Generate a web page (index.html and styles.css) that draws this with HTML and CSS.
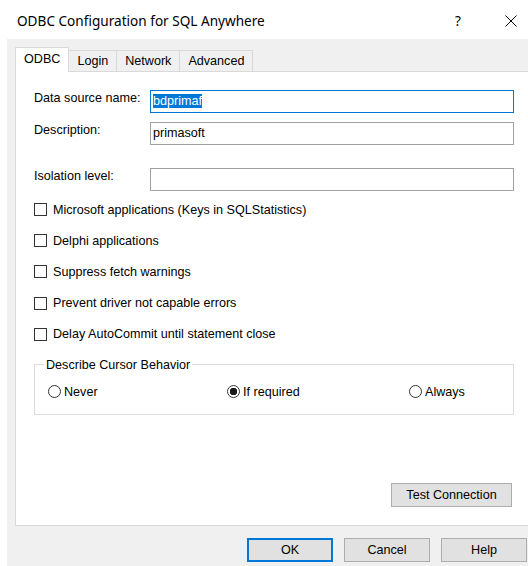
FILE: index.html
```html
<!DOCTYPE html>
<html lang="en">
<head>
<meta charset="utf-8">
<title>ODBC Configuration for SQL Anywhere</title>
<link rel="stylesheet" href="styles.css">
</head>
<body>
<div class="window">
  <div class="titlebar">
    <span class="title">ODBC Configuration for SQL Anywhere</span>
    <span class="caption-btn help">?</span>
    <span class="caption-btn close">
      <svg width="12" height="12" viewBox="0 0 12 12"><path d="M0.5 0.5 L11.5 11.5 M11.5 0.5 L0.5 11.5" stroke="#000" stroke-width="1" fill="none"/></svg>
    </span>
  </div>

  <div class="dialog">
    <div class="tabs">
      <div class="tab active">ODBC</div>
      <div class="tab">Login</div>
      <div class="tab">Network</div>
      <div class="tab">Advanced</div>
    </div>

    <div class="panel">
      <div class="form">
        <div class="field">
          <span class="label">Data source name:</span>
          <div class="input focused"><span class="selection">bdprimaf</span></div>
        </div>
        <div class="field">
          <span class="label">Description:</span>
          <div class="input">primasoft</div>
        </div>
        <div class="field iso">
          <span class="label">Isolation level:</span>
          <div class="input"></div>
        </div>

        <div class="checks">
          <div class="check"><span class="box"></span>Microsoft applications (Keys in SQLStatistics)</div>
          <div class="check"><span class="box"></span>Delphi applications</div>
          <div class="check"><span class="box"></span>Suppress fetch warnings</div>
          <div class="check"><span class="box"></span>Prevent driver not capable errors</div>
          <div class="check"><span class="box"></span>Delay AutoCommit until statement close</div>
        </div>

        <fieldset class="group">
          <legend>Describe Cursor Behavior</legend>
          <div class="radios">
            <div class="radio"><span class="dot"></span>Never</div>
            <div class="radio"><span class="dot on"></span>If required</div>
            <div class="radio"><span class="dot"></span>Always</div>
          </div>
        </fieldset>

        <div class="test-row">
          <button class="btn test">Test Connection</button>
        </div>
      </div>
    </div>

    <div class="footer">
      <button class="btn default">OK</button>
      <button class="btn">Cancel</button>
      <button class="btn">Help</button>
    </div>
  </div>
</div>
</body>
</html>
```

FILE: styles.css
```css
html, body {
  margin: 0;
  padding: 0;
}

body {
  width: 528px;
  height: 566px;
  overflow: hidden;
  background: #ffffff;
  font-family: "Liberation Sans", Arial, sans-serif;
  font-size: 12.6px;
  color: #000;
}

/* caption bar */
.titlebar {
  height: 39px;
  display: flex;
  align-items: center;
  padding-left: 17px;
  padding-top: 2px;
  box-sizing: border-box;
  width: 534px;
}

.title {
  flex: 1;
  font-family: "Noto Sans", "Open Sans", sans-serif;
  font-size: 13.6px;
  color: #000;
  white-space: nowrap;
}

.caption-btn {
  width: 46px;
  flex-shrink: 0;
  display: flex;
  align-items: center;
  justify-content: center;
}

.help {
  font-family: "Noto Sans", sans-serif;
  font-size: 13.5px;
  margin-right: 7px;
}

.close svg {
  display: block;
}

/* dialog client area */
.dialog {
  margin-left: 7px;
  height: 527px;
  background: #f0f0f0;
  padding-top: 8px;
  box-sizing: border-box;
}

.tabs {
  display: flex;
  align-items: flex-end;
  margin-left: 8px;
  height: 24px;
}

.tab {
  height: 21px;
  line-height: 21px;
  padding: 0 8px;
  border-top: 1px solid #d9d9d9;
  border-right: 1px solid #d9d9d9;
  box-sizing: border-box;
  background: #f0f0f0;
  white-space: nowrap;
}

.tab.active {
  height: 25px;
  line-height: 22px;
  margin-bottom: -1px;
  padding: 0 8px;
  border-left: 1px solid #d9d9d9;
  background: #ffffff;
  position: relative;
  z-index: 1;
}

.panel {
  margin-left: 8px;
  width: 540px;
  height: 455px;
  box-sizing: border-box;
  background: #ffffff;
  border: 1px solid #d9d9d9;
  padding: 18px 0 0 18px;
}

.form {
  width: 480px;
  display: flex;
  flex-direction: column;
}

/* text fields */
.field {
  display: flex;
  height: 23px;
}

.field + .field {
  margin-top: 9px;
}

.field.iso {
  margin-top: 23px;
}

.label {
  width: 116px;
  flex-shrink: 0;
  margin-top: 1px;
  line-height: 15px;
}

.input {
  flex: 1;
  box-sizing: border-box;
  border: 1px solid #a0a0a0;
  background: #fff;
  padding: 3px 2px;
  line-height: 15px;
}

.input.focused {
  border-color: #0078d7;
}

.selection {
  display: inline-block;
  background: #0078d7;
  color: #fff;
  line-height: 14px;
}

/* check boxes */
.checks {
  margin-top: 3px;
  display: flex;
  flex-direction: column;
}

.check {
  height: 31.2px;
  display: flex;
  align-items: center;
}

.box {
  width: 13px;
  height: 13px;
  box-sizing: border-box;
  border: 1px solid #333;
  background: #fff;
  margin-right: 6px;
  flex-shrink: 0;
}

/* option group */
.group {
  margin: 8px 0 0 0;
  padding: 13px 0 15px 13px;
  border: 1px solid #dcdcdc;
  min-width: 0;
}

.group legend {
  padding: 0 2px;
  margin-left: -4px;
  line-height: 14px;
}

.radios {
  display: grid;
  grid-template-columns: 179px 182px auto;
  height: 14px;
}

.radio {
  display: flex;
  align-items: center;
}

.dot {
  width: 13px;
  height: 13px;
  box-sizing: border-box;
  border: 1px solid #333;
  border-radius: 50%;
  background: #fff;
  margin-right: 3px;
  flex-shrink: 0;
}

.dot.on {
  background: radial-gradient(circle, #1a1a1a 0 3.5px, #fff 4px);
}

/* buttons */
.btn {
  font-family: "Liberation Sans", Arial, sans-serif;
  font-size: 12.6px;
  color: #000;
  height: 24px;
  box-sizing: border-box;
  background: #e1e1e1;
  border: 1px solid #adadad;
  padding: 0;
  margin: 0;
}

.btn.default {
  border: 2px solid #0078d7;
}

.test-row {
  display: flex;
  justify-content: flex-end;
  margin-top: 68px;
  padding-right: 2px;
}

.btn.test {
  width: 121px;
}

.footer {
  display: flex;
  justify-content: flex-end;
  gap: 11px;
  margin-top: 12px;
  padding-right: 1px;
}

.footer .btn {
  width: 86px;
}
```
